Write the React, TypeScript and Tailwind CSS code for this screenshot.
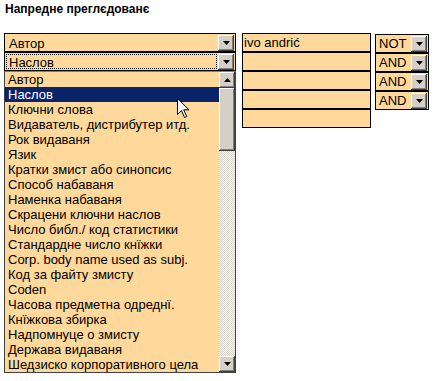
const fields = [
  "Автор",
  "Наслов",
  "Ключни слова",
  "Видаватель, дистрибутер итд.",
  "Рок видаваня",
  "Язик",
  "Кратки змист або синопсис",
  "Способ набаваня",
  "Наменка набаваня",
  "Скрацени ключни наслов",
  "Число библ./ код статистики",
  "Стандардне число кнїжки",
  "Corp. body name used as subj.",
  "Код за файту змисту",
  "Coden",
  "Часова предметна одреднї.",
  "Кнїжкова збирка",
  "Надпомнуце о змисту",
  "Держава видаваня",
  "Шедзиско корпоративного цела",
];

const bevel =
  "bg-[#d4d0c8] shadow-[inset_-1px_-1px_#404040,inset_1px_1px_#ffffff,inset_-2px_-2px_#808080]";

const Arrow = ({ up = false }: { up?: boolean }) => (
  <svg width="7" height="4" viewBox="0 0 7 4" className={up ? "rotate-180" : ""}>
    <path d="M0 0h7L3.5 4z" fill="#000" />
  </svg>
);

const ArrowBtn = ({ up = false, className = "" }: { up?: boolean; className?: string }) => (
  <div className={`flex items-center justify-center w-[16px] h-[16px] shrink-0 ${bevel} ${className}`}>
    <Arrow up={up} />
  </div>
);

const Select = ({ value, focused = false }: { value: string; focused?: boolean }) => (
  <div className="flex items-center h-[19px] border border-black bg-[#ffd89b] pr-[1px]">
    <div className="flex-1 h-full p-[1px]">
      <div
        className={`h-full pl-[2px] leading-[15px] ${focused ? "border border-dotted border-black" : "border border-transparent"}`}
      >
        {value}
      </div>
    </div>
    <ArrowBtn />
  </div>
);

const BoolSelect = ({ value }: { value: string }) => (
  <div className="flex items-center h-[19px] border border-black bg-[#ffd89b] pr-[1px]">
    <span className="flex-1 pl-[3px] leading-[17px]">{value}</span>
    <ArrowBtn />
  </div>
);

const Cursor = () => (
  <svg
    width="13"
    height="21"
    viewBox="0 0 13 21"
    className="absolute left-[172px] top-[26px]"
  >
    <path
      d="M0.5 0.5v16l4-4 3 7 2.2-1-3-6.7h5.3z"
      fill="#fff"
      stroke="#000"
      strokeWidth="1"
    />
  </svg>
);

export default function App() {
  return (
    <div className="w-[435px] h-[381px] bg-white text-black font-['Liberation_Sans',Arial,sans-serif] text-[13px]">
      <h1 className="pl-[5px] pt-[2px] text-[12px] font-bold leading-[15px]">Напредне преглєдованє</h1>

      <div className="flex pl-[4px] pt-[16px]">
        {/* field selects + open list */}
        <div className="flex flex-col w-[232px]">
          <Select value="Автор" />
          <Select value="Наслов" focused />
          <div className="relative flex h-[302px] border border-[#404040] border-t-[#808080] bg-[#ffd89b]">
            <ul className="flex-1">
              {fields.map((f, i) => (
                <li
                  key={f}
                  className={`h-[15px] pl-[3px] leading-[15px] whitespace-nowrap ${i === 1 ? "bg-[#0a246a] text-white" : ""}`}
                >
                  {f}
                </li>
              ))}
            </ul>
            <div className="flex flex-col w-[16px] bg-[conic-gradient(#d4d0c8_25%,#ffffff_0_50%,#d4d0c8_0_75%,#ffffff_0)] bg-[length:2px_2px]">
              <ArrowBtn up />
              <div className={`h-[63px] ${bevel}`} />
              <div className="flex-1" />
              <ArrowBtn />
            </div>
            <Cursor />
          </div>
        </div>

        {/* search terms */}
        <div className="flex flex-col w-[129px] ml-[6px]">
          {["ivo andrić", "", "", "", ""].map((v, i) => (
            <div key={i} className="h-[19px] border border-black bg-[#ffd89b] pl-[1px] leading-[17px]">
              {v}
            </div>
          ))}
        </div>

        {/* boolean operators */}
        <div className="flex flex-col w-[54px] ml-[4px] pt-[1px]">
          {["NOT", "AND", "AND", "AND"].map((v, i) => (
            <BoolSelect key={i} value={v} />
          ))}
        </div>
      </div>
    </div>
  );
}
